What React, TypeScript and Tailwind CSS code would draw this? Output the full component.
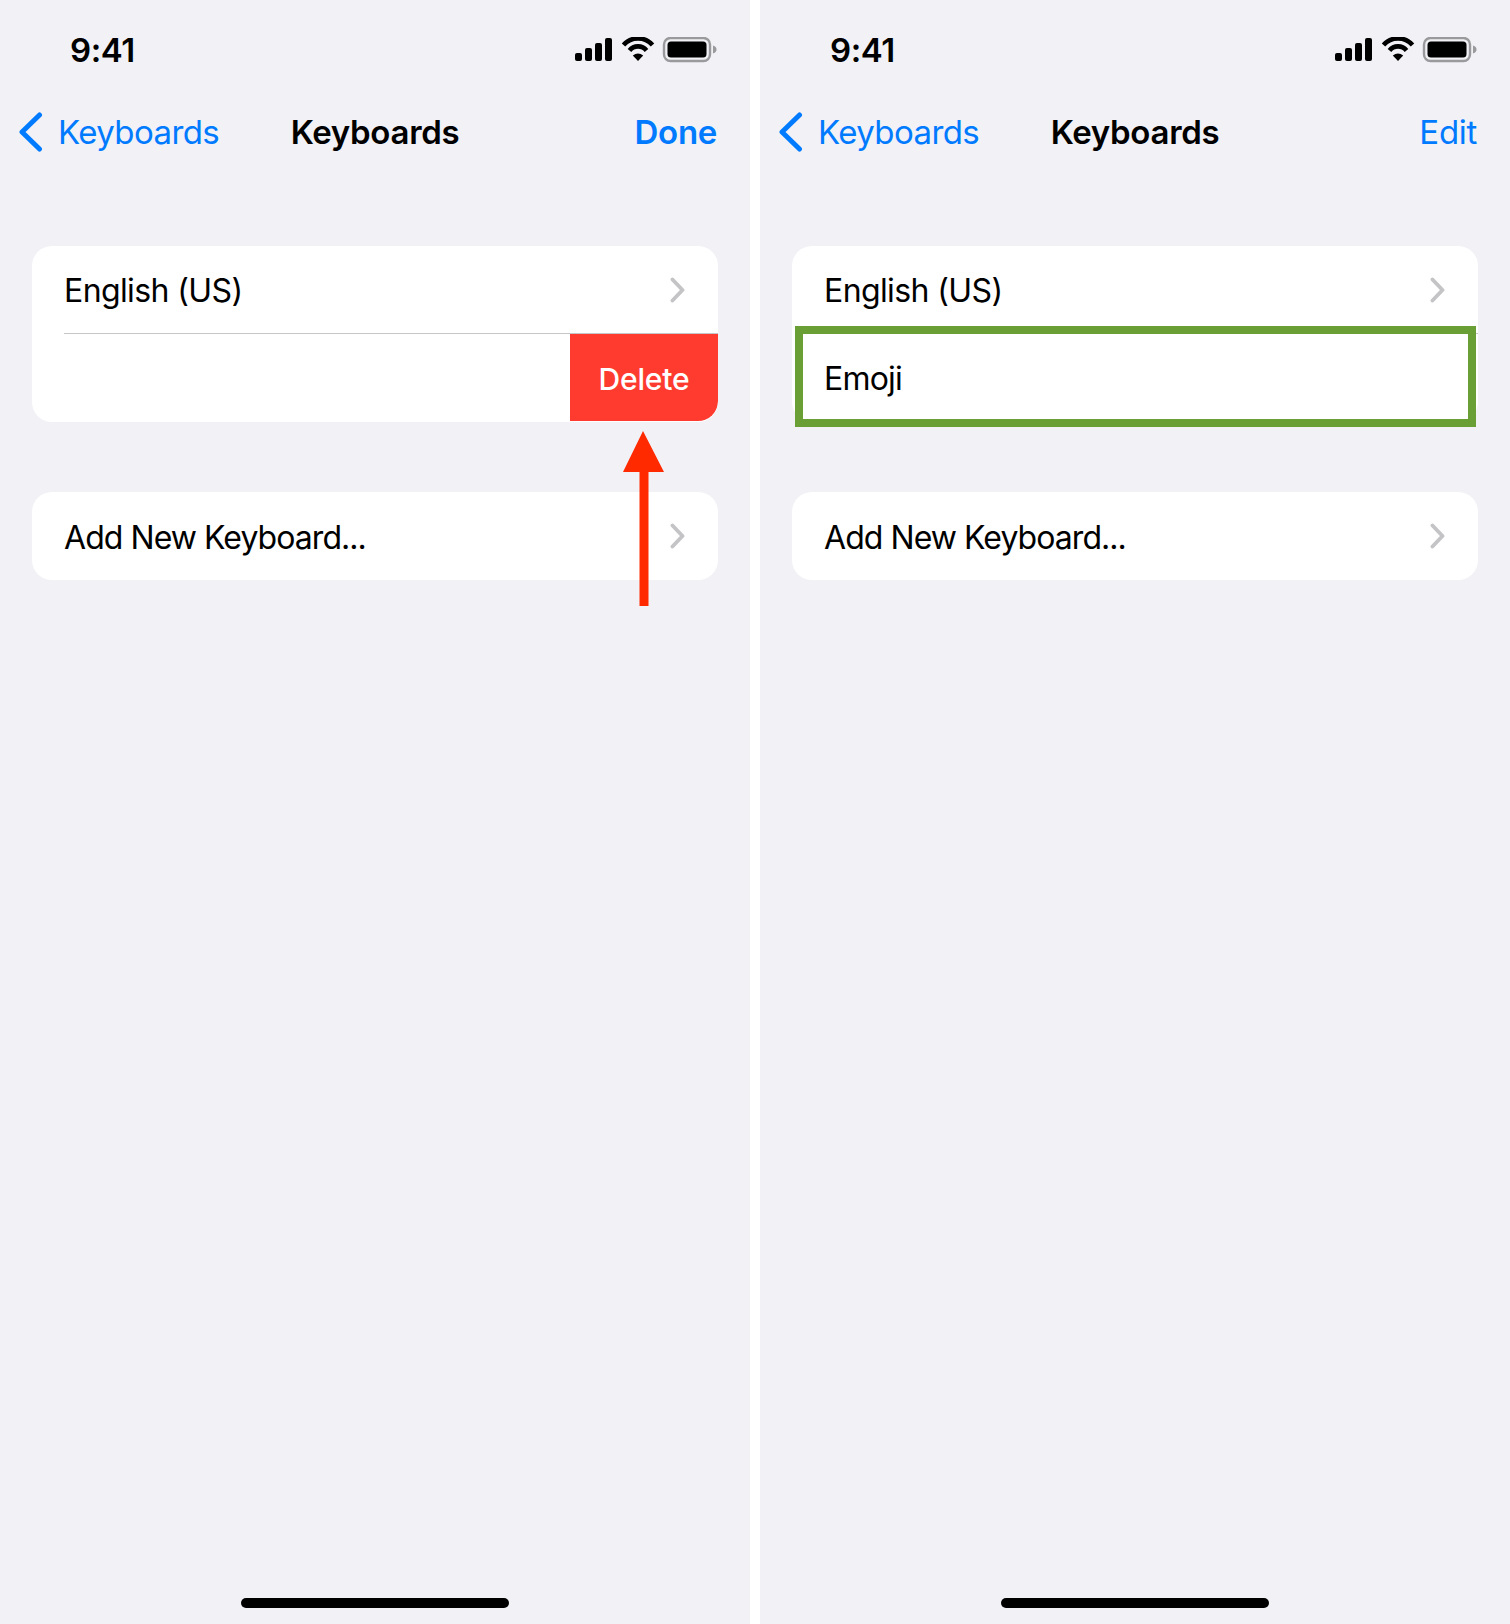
const font = { fontFamily: '"Inter", "Liberation Sans", sans-serif' };

function StatusIcons() {
  return (
    <svg width="143" height="26" viewBox="0 0 143 26" className="block">
      <rect x="0" y="16" width="7" height="8" rx="2" fill="#000" />
      <rect x="10" y="11" width="7" height="13" rx="2" fill="#000" />
      <rect x="20" y="6" width="7" height="18" rx="2" fill="#000" />
      <rect x="30" y="1" width="7" height="23" rx="2" fill="#000" />
      <path d="M48.5 8 A19.3 19.3 0 0 1 77.5 8" fill="none" stroke="#000" strokeWidth="4.6" />
      <path d="M54.5 13.5 A10.8 10.8 0 0 1 71.5 13.5" fill="none" stroke="#000" strokeWidth="4.6" />
      <path d="M63 24 L57.8 18.4 Q63 14.6 68.2 18.4 Z" fill="#000" />
      <rect x="89" y="1" width="46" height="23" rx="6.5" fill="none" stroke="#9a9a9c" strokeWidth="2.4" />
      <rect x="92.5" y="4.5" width="39" height="16" rx="3.5" fill="#000" />
      <path d="M138 8.5 C140.4 9.2 141.5 10.6 141.5 12.5 C141.5 14.4 140.4 15.8 138 16.5 Z" fill="#9a9a9c" />
    </svg>
  );
}

function BackChevron() {
  return (
    <svg width="24" height="40" viewBox="0 0 24 40" className="block">
      <path d="M20.5 3 L3 20 L20.5 37" fill="none" stroke="#007aff" strokeWidth="5" strokeLinecap="round" strokeLinejoin="round" />
    </svg>
  );
}

function RowChevron() {
  return (
    <svg width="15" height="26" viewBox="0 0 15 26" className="block">
      <path d="M2.5 2.5 L12.5 13 L2.5 23.5" fill="none" stroke="#c4c4c7" strokeWidth="3.8" strokeLinecap="round" strokeLinejoin="round" />
    </svg>
  );
}

function Row({ label, rowClass, textClass }: { label: string; rowClass: string; textClass: string }) {
  return (
    <div className={`flex items-center justify-between pl-[32px] pr-[33px] ${rowClass}`}>
      <span className={`pt-[3px] text-[32px] text-black ${textClass}`}>{label}</span>
      <RowChevron />
    </div>
  );
}

function Panel({
  action,
  actionClass,
  children,
  overlay,
}: {
  action: string;
  actionClass: string;
  children: React.ReactNode;
  overlay?: React.ReactNode;
}) {
  return (
    <div className="relative flex h-[1624px] w-[750px] flex-col bg-[#f1f1f6]" style={font}>
      <div className="flex h-[100px] items-center justify-between pl-[70px] pr-[32px]">
        <span className="pt-[2px] text-[33px] font-semibold tracking-[-0.4px] text-black">9:41</span>
        <StatusIcons />
      </div>
      <div className="grid h-[64px] grid-cols-[1fr_auto_1fr] items-center px-[19px]">
        <div className="flex items-center gap-[15px]">
          <BackChevron />
          <span className="pt-[2px] text-[33px] tracking-[-0.6px] text-[#007aff]">Keyboards</span>
        </div>
        <span className="pt-[2px] text-[33px] font-semibold tracking-[-0.3px] text-black">Keyboards</span>
        <span className={`mr-[14px] pt-[2px] text-right text-[33px] text-[#007aff] ${actionClass}`}>{action}</span>
      </div>
      <div className="mt-[82px] px-[32px]">
        {children}
        <div className="mt-[70px] overflow-hidden rounded-[20px] bg-white">
          <Row label="Add New Keyboard..." rowClass="h-[88px]" textClass="tracking-[-0.95px]" />
        </div>
      </div>
      <div className="mx-auto mb-[16px] mt-auto h-[10px] w-[268px] rounded-full bg-black" />
      {overlay}
    </div>
  );
}

export default function App() {
  return (
    <div className="flex w-[1510px] gap-[10px] bg-white">
      <Panel
        action="Done"
        actionClass="font-semibold tracking-[-0.3px]"
        overlay={
          <svg width="44" height="176" viewBox="0 0 44 176" className="absolute left-[622px] top-[431px]">
            <path d="M21 0 L42 41 L26.5 41 L26.5 175 L17.5 175 L17.5 41 L1 41 Z" fill="#ff2a00" />
          </svg>
        }
      >
        <div className="flex h-[176px] flex-col overflow-hidden rounded-[20px] bg-white">
          <Row label="English (US)" rowClass="h-[87px]" textClass="tracking-[-0.6px]" />
          <div className="ml-[32px] h-[1px] shrink-0 bg-[#c6c6c8]" />
          <div className="flex flex-1 justify-end pb-[1px]">
            <div className="flex w-[148px] items-center justify-center rounded-br-[20px] bg-[#ff3b30] pt-[3px] text-[30px] font-medium tracking-[-0.2px] text-white">
              Delete
            </div>
          </div>
        </div>
      </Panel>
      <Panel
        action="Edit"
        actionClass="tracking-[-0.3px]"
        overlay={
          <div className="absolute left-[35px] top-[326px] flex h-[101px] w-[681px] items-center border-[8px] border-[#699f34] bg-white pl-[21px]">
            <span className="pt-[5px] text-[32px] tracking-[-0.8px] text-black">Emoji</span>
          </div>
        }
      >
        <div className="flex h-[176px] flex-col overflow-hidden rounded-[20px] bg-white">
          <Row label="English (US)" rowClass="h-[87px]" textClass="tracking-[-0.6px]" />
          <div className="ml-[32px] h-[1px] shrink-0 bg-[#c6c6c8]" />
        </div>
      </Panel>
    </div>
  );
}
